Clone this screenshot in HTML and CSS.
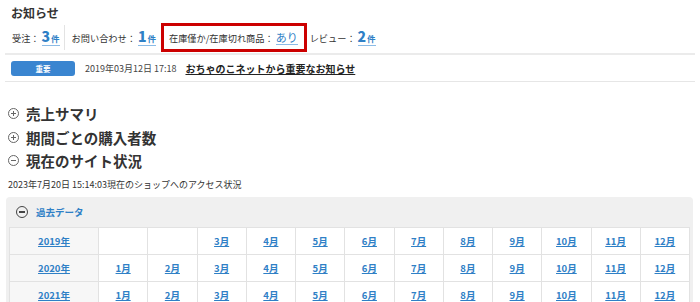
FILE: index.html
```html
<!DOCTYPE html>
<html lang="ja">
<head>
    <meta charset="UTF-8">
    <title>ダッシュボード</title>
    <link rel="stylesheet" href="styles.css">
</head>
<body>
    <div class="notice">
        <h2 class="notice-title">お知らせ</h2>
        <div class="counts">
            <span class="count-item">受注：<a href="#" class="count"><b>3</b>件</a></span>
            <span class="sep"></span>
            <span class="count-item">お問い合わせ：<a href="#" class="count"><b>1</b>件</a></span>
            <span class="count-item alert">在庫僅か/在庫切れ商品：<a href="#" class="count">あり</a></span>
            <span class="count-item">レビュー：<a href="#" class="count"><b>2</b>件</a></span>
        </div>
        <div class="news-row">
            <span class="badge">重要</span>
            <span class="news-date">2019年03月12日 17:18</span>
            <a href="#" class="news-link">おちゃのこネットから重要なお知らせ</a>
        </div>
    </div>

    <div class="sections">
        <h3 class="toggle"><span class="icon plus"></span>売上サマリ</h3>
        <h3 class="toggle"><span class="icon plus"></span>期間ごとの購入者数</h3>
        <h3 class="toggle"><span class="icon minus"></span>現在のサイト状況</h3>
        <p class="access-note">2023年7月20日 15:14:03現在のショップへのアクセス状況</p>

        <div class="panel">
            <div class="panel-head"><span class="icon minus big"></span>過去データ</div>
            <table class="months">
                <tr>
                    <th><a href="#">2019年</a></th>
                    <td></td><td></td>
                    <td><a href="#">3月</a></td><td><a href="#">4月</a></td><td><a href="#">5月</a></td>
                    <td><a href="#">6月</a></td><td><a href="#">7月</a></td><td><a href="#">8月</a></td>
                    <td><a href="#">9月</a></td><td><a href="#">10月</a></td><td><a href="#">11月</a></td>
                    <td><a href="#">12月</a></td>
                </tr>
                <tr>
                    <th><a href="#">2020年</a></th>
                    <td><a href="#">1月</a></td><td><a href="#">2月</a></td>
                    <td><a href="#">3月</a></td><td><a href="#">4月</a></td><td><a href="#">5月</a></td>
                    <td><a href="#">6月</a></td><td><a href="#">7月</a></td><td><a href="#">8月</a></td>
                    <td><a href="#">9月</a></td><td><a href="#">10月</a></td><td><a href="#">11月</a></td>
                    <td><a href="#">12月</a></td>
                </tr>
                <tr>
                    <th><a href="#">2021年</a></th>
                    <td><a href="#">1月</a></td><td><a href="#">2月</a></td>
                    <td><a href="#">3月</a></td><td><a href="#">4月</a></td><td><a href="#">5月</a></td>
                    <td><a href="#">6月</a></td><td><a href="#">7月</a></td><td><a href="#">8月</a></td>
                    <td><a href="#">9月</a></td><td><a href="#">10月</a></td><td><a href="#">11月</a></td>
                    <td><a href="#">12月</a></td>
                </tr>
            </table>
        </div>
    </div>
</body>
</html>
```

FILE: styles.css
```css
body {
    font-family: "Noto Sans CJK JP", "Noto Sans", sans-serif;
    color: #333;
    margin: 0;
    padding: 0 5px;
    background: #fff;
}
a {
    color: #2f80c6;
}
.notice-title {
    font-size: 12px;
    font-weight: bold;
    margin: 0;
    padding: 4px 6px 0;
    line-height: 18px;
}
.counts {
    display: flex;
    align-items: center;
    height: 31px;
    padding-left: 7px;
    border-bottom: 2px solid #ebebeb;
    font-size: 9.2px;
}
.count-item {
    display: flex;
    align-items: center;
    height: 29px;
}
.count {
    text-decoration: none;
    border-bottom: 1px solid #8bbbe6;
    line-height: 13px;
    margin-left: 2px;
    font-size: 8.5px;
    font-weight: bold;
}
.count b {
    font-size: 14px;
    margin-right: 1px;
}
.sep {
    width: 1px;
    height: 25px;
    background: #e3e3e3;
    margin: 0 7px 0 4px;
}
.alert {
    border: 3px solid #cc0000;
    padding: 0 6px 0 5px;
    height: 23px;
    margin: 0 3px 0 5px;
}
.alert .count {
    font-size: 11px;
    font-weight: normal;
    margin-left: 2px;
}
.news-row {
    display: flex;
    align-items: center;
    height: 26px;
    padding-left: 6px;
    border-bottom: 1px solid #e6e6e6;
    font-size: 9px;
}
.badge {
    width: 64px;
    height: 15px;
    line-height: 15px;
    background: #3a85d0;
    border-radius: 3px;
    color: #fff;
    font-size: 7.5px;
    font-weight: bold;
    text-align: center;
    margin-right: 10px;
}
.news-date {
    margin-right: 9px;
    color: #444;
}
.news-link {
    color: #222;
    font-weight: bold;
    font-size: 10px;
}
.sections {
    padding-top: 20px;
}
.toggle {
    display: flex;
    align-items: center;
    margin: 0;
    font-size: 14.5px;
    line-height: 23.5px;
    color: #333;
}
.icon {
    position: relative;
    display: inline-block;
    width: 9px;
    height: 9px;
    border: 1px solid #666;
    border-radius: 50%;
    margin: 0 7px 0 3px;
}
.icon::before,
.icon::after {
    content: "";
    position: absolute;
    background: #666;
    left: 2px;
    top: 4px;
    width: 5px;
    height: 1px;
}
.plus::after {
    left: 4px;
    top: 2px;
    width: 1px;
    height: 5px;
}
.minus::after {
    display: none;
}
.access-note {
    font-size: 9px;
    margin: 4px 0 0 3px;
    line-height: 16px;
    color: #333;
}
.panel {
    background: #f0f0f0;
    border-radius: 4px;
    padding: 0 3px;
    margin: 4px 2px 0 1px;
}
.panel-head {
    display: flex;
    align-items: center;
    height: 30px;
    padding-left: 7px;
    font-size: 9.5px;
    font-weight: bold;
    color: #2f80c6;
}
.icon.big {
    width: 10px;
    height: 10px;
    border: 1.5px solid #444;
    margin: 0 8px 0 0;
}
.icon.big::before {
    background: #444;
    left: 2px;
    top: 4.5px;
    width: 6px;
    height: 1.5px;
}
.months {
    width: 100%;
    border-collapse: collapse;
    table-layout: fixed;
    background: #fff;
}
.months th,
.months td {
    border: 1px solid #e2e2e2;
    height: 26px;
    padding: 0;
    text-align: center;
    font-size: 9.5px;
    font-weight: bold;
}
.months th {
    width: 88px;
    background: #f7f7f7;
}
```
